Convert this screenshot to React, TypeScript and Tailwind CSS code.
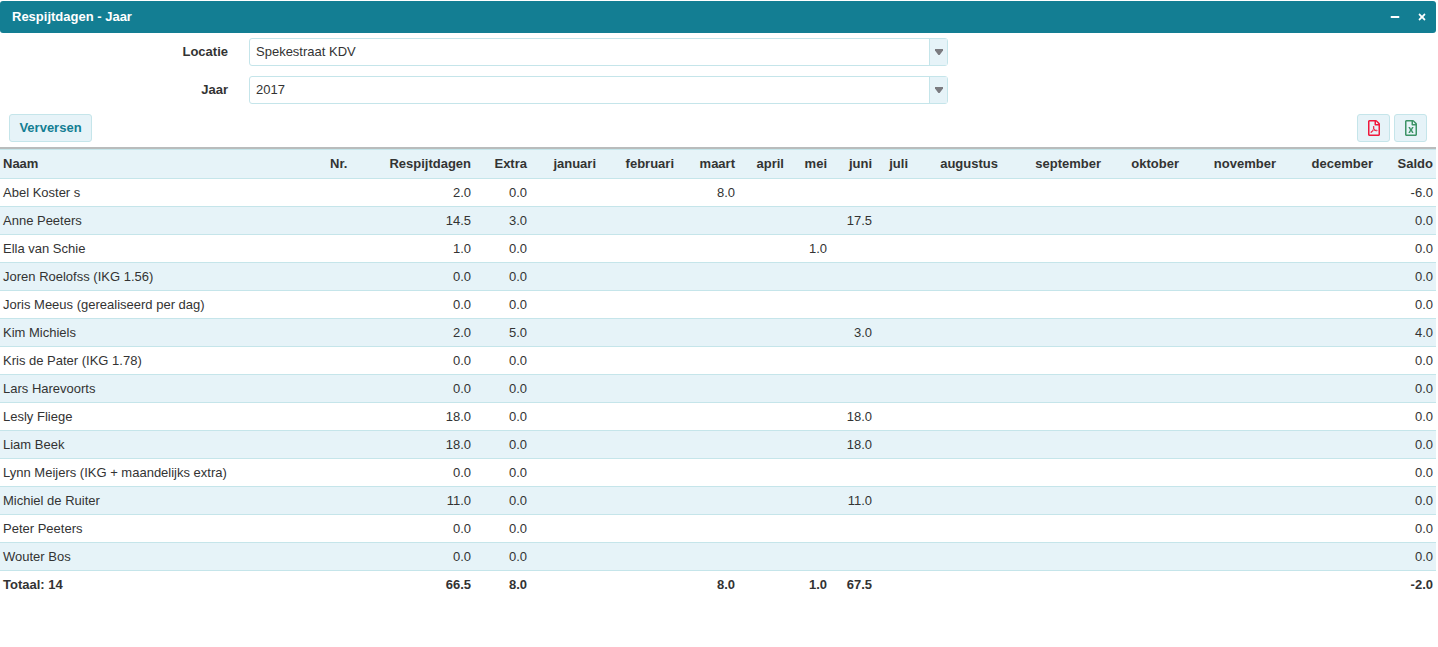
import { FaMinus, FaTimes, FaRegFilePdf, FaRegFileExcel } from "react-icons/fa";

const months = ["januari", "februari", "maart", "april", "mei", "juni", "juli", "augustus", "september", "oktober", "november", "december"];

type Row = { naam: string; resp: string; extra: string; m?: Record<string, string>; saldo: string };

const rows: Row[] = [
  { naam: "Abel Koster s", resp: "2.0", extra: "0.0", m: { maart: "8.0" }, saldo: "-6.0" },
  { naam: "Anne Peeters", resp: "14.5", extra: "3.0", m: { juni: "17.5" }, saldo: "0.0" },
  { naam: "Ella van Schie", resp: "1.0", extra: "0.0", m: { mei: "1.0" }, saldo: "0.0" },
  { naam: "Joren Roelofss (IKG 1.56)", resp: "0.0", extra: "0.0", saldo: "0.0" },
  { naam: "Joris Meeus (gerealiseerd per dag)", resp: "0.0", extra: "0.0", saldo: "0.0" },
  { naam: "Kim Michiels", resp: "2.0", extra: "5.0", m: { juni: "3.0" }, saldo: "4.0" },
  { naam: "Kris de Pater (IKG 1.78)", resp: "0.0", extra: "0.0", saldo: "0.0" },
  { naam: "Lars Harevoorts", resp: "0.0", extra: "0.0", saldo: "0.0" },
  { naam: "Lesly Fliege", resp: "18.0", extra: "0.0", m: { juni: "18.0" }, saldo: "0.0" },
  { naam: "Liam Beek", resp: "18.0", extra: "0.0", m: { juni: "18.0" }, saldo: "0.0" },
  { naam: "Lynn Meijers (IKG + maandelijks extra)", resp: "0.0", extra: "0.0", saldo: "0.0" },
  { naam: "Michiel de Ruiter", resp: "11.0", extra: "0.0", m: { juni: "11.0" }, saldo: "0.0" },
  { naam: "Peter Peeters", resp: "0.0", extra: "0.0", saldo: "0.0" },
  { naam: "Wouter Bos", resp: "0.0", extra: "0.0", saldo: "0.0" },
];

const totals: Record<string, string> = { maart: "8.0", mei: "1.0", juni: "67.5" };

const Select = ({ label, value }: { label: string; value: string }) => (
  <div className="flex h-7 items-center">
    <label className="w-[228px] text-right font-bold">{label}</label>
    <div className="ml-[21px] flex h-7 w-[699px] items-center rounded-[3px] border border-[#c5e5ea]">
      <span className="flex-1 pl-[6px]">{value}</span>
      <span className="flex h-full w-[18px] items-center justify-center border-l border-[#c5e5ea] bg-[#e6f3f8] text-[#7b7b80]">
        <svg width="8" height="6" viewBox="0 0 8 6">
          <path d="M0 0h8v1.5L4.6 6H3.4L0 1.5z" fill="currentColor" />
        </svg>
      </span>
    </div>
  </div>
);

const IconButton = ({ children, color }: { children: React.ReactNode; color: string }) => (
  <button className={`flex h-7 w-[33px] items-center justify-center rounded-[3px] border border-[#c5e5ea] bg-[#e6f3f8] text-[16px] ${color}`}>
    {children}
  </button>
);

export default function App() {
  return (
    <div className="h-[647px] w-[1438px] overflow-hidden bg-white pt-px font-['Liberation_Sans',Arial,sans-serif] text-[13px] text-[#333]">
      <div className="flex h-8 w-[1436px] items-center justify-between rounded-[3px] bg-[#137e93] pl-3 pr-[9px] text-white">
        <span className="font-bold">Respijtdagen - Jaar</span>
        <div className="flex items-center gap-[17px] text-[10px]">
          <FaMinus />
          <FaTimes />
        </div>
      </div>

      <div className="flex flex-col gap-[10px] pt-[5px]">
        <Select label="Locatie" value="Spekestraat KDV" />
        <Select label="Jaar" value="2017" />
      </div>

      <div className="mt-[10px] flex h-7 w-[1436px] items-center justify-between pl-[9px] pr-[9px]">
        <button className="h-7 w-[83px] rounded-[3px] border border-[#c5e5ea] bg-[#e6f3f8] font-bold text-[#137e93]">Verversen</button>
        <div className="flex gap-1">
          <IconButton color="text-[#f0193c]"><FaRegFilePdf /></IconButton>
          <IconButton color="text-[#3d9467]"><FaRegFileExcel /></IconButton>
        </div>
      </div>

      <div className="mt-[5px] h-[2px] w-[1436px] bg-[#b9bcbc]" />

      <table className="w-[1436px] table-fixed border-collapse">
        <colgroup>
          <col className="w-[327px]" />
          <col className="w-[59px]" />
          <col className="w-[88px]" />
          <col className="w-[56px]" />
          <col className="w-[69px]" />
          <col className="w-[78px]" />
          <col className="w-[61px]" />
          <col className="w-[49px]" />
          <col className="w-[43px]" />
          <col className="w-[45px]" />
          <col className="w-[36px]" />
          <col className="w-[90px]" />
          <col className="w-[103px]" />
          <col className="w-[78px]" />
          <col className="w-[97px]" />
          <col className="w-[97px]" />
          <col className="w-[60px]" />
        </colgroup>
        <thead>
          <tr className="h-[29px] border-y border-[#c5e5ea] bg-[#e6f3f8] font-bold">
            <th className="px-[3px] text-left">Naam</th>
            <th className="px-[3px] text-left">Nr.</th>
            <th className="px-[3px] text-right">Respijtdagen</th>
            <th className="px-[3px] text-right">Extra</th>
            {months.map((m) => (
              <th key={m} className="px-[3px] text-right">{m}</th>
            ))}
            <th className="px-[3px] text-right">Saldo</th>
          </tr>
        </thead>
        <tbody>
          {rows.map((r, i) => (
            <tr key={r.naam} className={`h-7 border-b border-[#c5e5ea] ${i % 2 === 1 ? "bg-[#e6f3f8]" : "bg-white"}`}>
              <td className="whitespace-nowrap px-[3px]">{r.naam}</td>
              <td className="px-[3px]"></td>
              <td className="px-[3px] text-right">{r.resp}</td>
              <td className="px-[3px] text-right">{r.extra}</td>
              {months.map((m) => (
                <td key={m} className="px-[3px] text-right">{r.m?.[m]}</td>
              ))}
              <td className="px-[3px] text-right">{r.saldo}</td>
            </tr>
          ))}
        </tbody>
        <tfoot>
          <tr className="h-7 font-bold">
            <td className="px-[3px]">Totaal: 14</td>
            <td className="px-[3px]"></td>
            <td className="px-[3px] text-right">66.5</td>
            <td className="px-[3px] text-right">8.0</td>
            {months.map((m) => (
              <td key={m} className="px-[3px] text-right">{totals[m]}</td>
            ))}
            <td className="px-[3px] text-right">-2.0</td>
          </tr>
        </tfoot>
      </table>
    </div>
  );
}
